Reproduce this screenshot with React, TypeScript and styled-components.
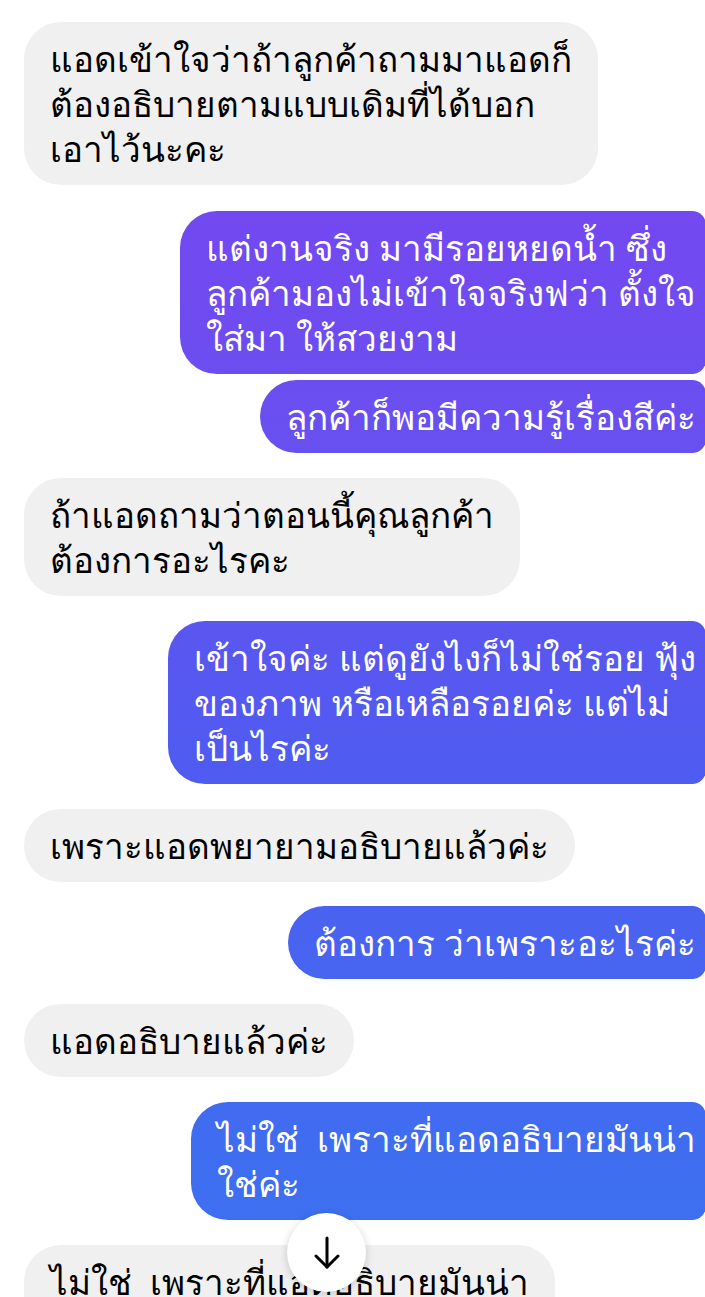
import React from 'react';
import styled, { createGlobalStyle } from 'styled-components';

const GlobalStyle = createGlobalStyle`
    html, body {
        margin: 0;
        padding: 0;
        background: #ffffff;
    }
    body {
        font-family: 'Noto Sans', 'DejaVu Sans', sans-serif;
        overflow: hidden;
    }
`;

const Screen = styled.div`
    position: relative;
    width: 705px;
    height: 1297px;
    overflow: hidden;
    background: #ffffff;
`;

const Thread = styled.div`
    display: flex;
    flex-direction: column;
    padding-top: 22px;
`;

const Row = styled.div<{ $mine?: boolean; $gap: number }>`
    display: flex;
    justify-content: ${props => (props.$mine ? 'flex-end' : 'flex-start')};
    padding-left: 24px;
    margin-right: ${props => (props.$mine ? '-1px' : '0')};
    margin-top: ${props => props.$gap}px;
`;

const Bubble = styled.div<{ $mine?: boolean }>`
    padding: ${props => (props.$mine ? '14px 10px 14px 26px' : '14px 26px')};
    border-radius: ${props => (props.$mine ? '37px 14px 14px 37px' : '37px')};
    font-size: 35px;
    line-height: 45px;
    white-space: pre;
    color: ${props => (props.$mine ? '#ffffff' : '#000000')};
    background: ${props =>
        props.$mine
            ? 'linear-gradient(180deg, #7c42f0 0px, #6a4ff0 420px, #505bf0 760px, #3d70f0 1220px)'
            : '#f0f0f0'};
    background-attachment: ${props => (props.$mine ? 'fixed' : 'scroll')};
`;

const ScrollDown = styled.div`
    position: absolute;
    left: 287px;
    top: 1213px;
    width: 79px;
    height: 79px;
    border-radius: 50%;
    background: #ffffff;
    box-shadow: 0 2px 8px rgba(0, 0, 0, 0.18);
    display: flex;
    align-items: center;
    justify-content: center;
`;

type Message = { mine?: boolean; gap: number; lines: string[] };

const messages: Message[] = [
    {
        gap: 0,
        lines: ['แอดเข้าใจว่าถ้าลูกค้าถามมาแอดก็', 'ต้องอธิบายตามแบบเดิมที่ได้บอก', 'เอาไว้นะคะ'],
    },
    {
        mine: true,
        gap: 26,
        lines: ['แต่งานจริง มามีรอยหยดน้ำ ซึ่ง', 'ลูกค้ามองไม่เข้าใจจริงฟว่า ตั้งใจ', 'ใส่มา ให้สวยงาม'],
    },
    { mine: true, gap: 6, lines: ['ลูกค้าก็พอมีความรู้เรื่องสีค่ะ'] },
    { gap: 25, lines: ['ถ้าแอดถามว่าตอนนี้คุณลูกค้า', 'ต้องการอะไรคะ'] },
    {
        mine: true,
        gap: 25,
        lines: ['เข้าใจค่ะ แต่ดูยังไงก็ไม่ใช่รอย ฟุ้ง', 'ของภาพ หรือเหลือรอยค่ะ แต่ไม่', 'เป็นไรค่ะ'],
    },
    { gap: 25, lines: ['เพราะแอดพยายามอธิบายแล้วค่ะ'] },
    { mine: true, gap: 24, lines: ['ต้องการ ว่าเพราะอะไรค่ะ'] },
    { gap: 25, lines: ['แอดอธิบายแล้วค่ะ'] },
    { mine: true, gap: 25, lines: ['ไม่ใช่  เพราะที่แอดอธิบายมันน่า', 'ใช่ค่ะ'] },
    { gap: 25, lines: ['ไม่ใช่  เพราะที่แอดอธิบายมันน่า', 'ใช่ค่ะ'] },
];

const App = () => (
    <>
        <GlobalStyle />
        <Screen>
            <Thread>
                {messages.map((m, i) => (
                    <Row key={i} $mine={m.mine} $gap={m.gap}>
                        <Bubble $mine={m.mine}>{m.lines.join('\n')}</Bubble>
                    </Row>
                ))}
            </Thread>
            <ScrollDown>
                <svg width="26" height="34" viewBox="0 0 26 34" fill="none" stroke="#000" strokeWidth="3" strokeLinecap="round" strokeLinejoin="round">
                    <path d="M13 2v29" />
                    <path d="M2 20l11 11 11-11" />
                </svg>
            </ScrollDown>
        </Screen>
    </>
);

export default App;
